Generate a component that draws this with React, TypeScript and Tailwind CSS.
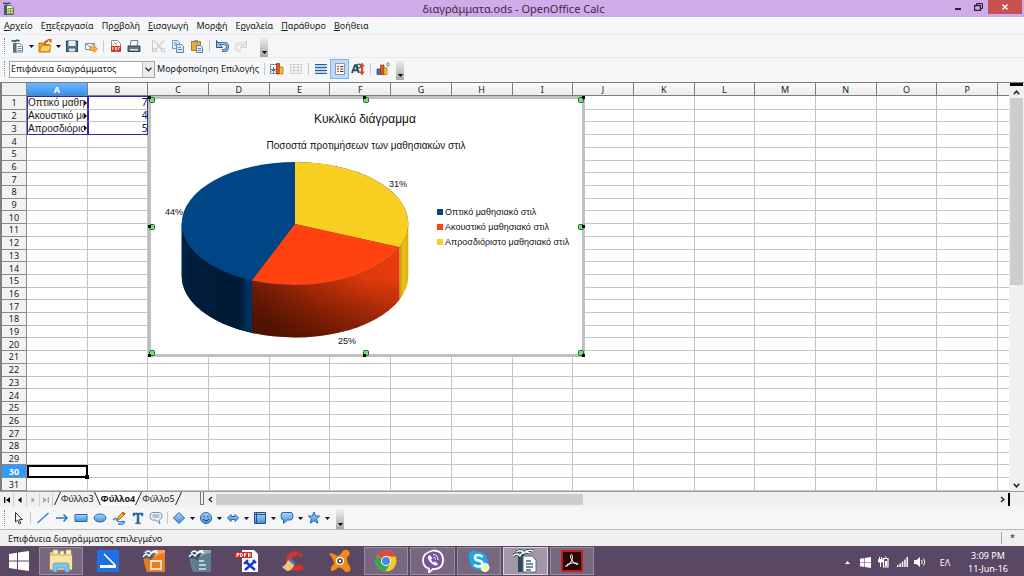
import React, { type ReactNode } from 'react';

type IconProps = { children: ReactNode; w?: number; h?: number };

function Icon({ children, w = 14, h = 14 }: IconProps) {
  return (
    <svg width={w} height={h} viewBox={`0 0 ${w} ${h}`} aria-hidden="true" className="shrink-0">
      {children}
    </svg>
  );
}

function Tool({ label, children, wide, active }: { label: string; children: ReactNode; wide?: boolean; active?: boolean }) {
  return (
    <button
      type="button"
      aria-label={label}
      title={label}
      className={`flex h-5 shrink-0 items-center justify-center ${wide ? 'w-[19px]' : 'w-[18px]'} ${
        active ? 'border border-[#7fb2e5] bg-[#b9dafa]' : ''
      }`}
    >
      {children}
    </button>
  );
}

function Caret({ label }: { label: string }) {
  return (
    <button type="button" aria-label={label} className="flex h-5 w-[9px] shrink-0 items-center justify-center">
      <Icon w={5} h={3}>
        <path d="M0 0h5L2.500 3z" fill="#111" />
      </Icon>
    </button>
  );
}

function Grip() {
  return <span className="ml-1 mr-1 h-4 w-px shrink-0 border-l border-dotted border-[#8c8c8c]" />;
}

function Sep() {
  return <span className="mx-[3px] h-3 w-px shrink-0 bg-[#c9c9c9]" />;
}

function BarEnd() {
  return (
    <button
      type="button"
      aria-label="Περισσότερα"
      className="flex h-5 w-2 shrink-0 items-end justify-center self-end bg-linear-to-b from-[#efefef] to-[#a8a8a8] pb-[3px]"
    >
      <Icon w={5} h={3}>
        <path d="M0 0h5L2.500 3z" fill="#000" />
      </Icon>
    </button>
  );
}

/* ---------- window frame ---------- */

function TitleBar() {
  return (
    <header className="flex h-[17px] shrink-0 items-center bg-[#cfabe8]">
      <span className="flex-1 pl-[3px]">
        <Icon w={12} h={14}>
          <path d="M1.500 3.500H8l2.500 2.500v6.500h-9z" fill="#eef5e4" stroke="#5c6b70" />
          <path d="M1 3h3v10H1z" fill="#465a63" />
          <path d="M0 1.500q2-1 3.500 .5q2-1.500 4-.5" stroke="#2c3b42" strokeWidth="1.200" fill="none" />
          <path d="M5 6.500h5v5H5z" fill="#e8f3b0" stroke="#7ba331" />
          <path d="M5 9h5M7.500 6.500v5" stroke="#7ba331" />
        </Icon>
      </span>
      <h1 className="text-[11px] leading-4 text-[#3a2b45]">διαγράμματα.ods - OpenOffice Calc</h1>
      <div className="flex h-full flex-1 items-start justify-end">
        <button type="button" aria-label="Ελαχιστοποίηση" className="flex h-[14px] w-5 items-center justify-center">
          <Icon w={6} h={6}>
            <path d="M0 4h6v2H0z" fill="#2d2038" />
          </Icon>
        </button>
        <button type="button" aria-label="Επαναφορά" className="flex h-[14px] w-5 items-center justify-center">
          <Icon w={9} h={8}>
            <path d="M2.500 2V.5h6v5H7" fill="none" stroke="#2d2038" />
            <path d="M.5 2.500h6v5h-6z" fill="none" stroke="#2d2038" strokeWidth="1.400" />
          </Icon>
        </button>
        <button type="button" aria-label="Κλείσιμο" className="mr-0.5 flex h-[14px] w-[34px] items-center justify-center bg-[#c75050]">
          <Icon w={6} h={6}>
            <path d="M.5 .5l5 5M5.500 .5l-5 5" stroke="#fff" strokeWidth="1.400" />
          </Icon>
        </button>
      </div>
    </header>
  );
}

const menus: [string, string, string][] = [
  ['', 'Α', 'ρχείο'],
  ['Ε', 'π', 'εξεργασία'],
  ['Πρ', 'ο', 'βολή'],
  ['', 'Ε', 'ισαγωγή'],
  ['Μορ', 'φ', 'ή'],
  ['Ε', 'ρ', 'γαλεία'],
  ['', 'Π', 'αράθυρο'],
  ['', 'Β', 'οήθεια'],
];

function MenuBar() {
  return (
    <nav className="flex h-[18px] shrink-0 items-center gap-2 border-b border-[#ebebeb] bg-[#f5f6f7] pl-1 text-[9px] leading-4">
      {menus.map(([a, u, b]) => (
        <button key={a + u + b} type="button" className="whitespace-nowrap">
          {a}
          <span className="underline">{u}</span>
          {b}
        </button>
      ))}
    </nav>
  );
}

/* ---------- toolbars ---------- */

function StandardBar() {
  return (
    <div role="toolbar" aria-label="Βασική" className="flex h-[22px] shrink-0 items-center bg-[#f4f6f8]">
      <Grip />
      <Tool label="Νέο">
        <Icon>
          <path d="M2.500 4.500h6l3 2.500v6h-9z" fill="#f4f9fc" stroke="#6a8596" />
          <path d="M2 4h3.500v9.500H2z" fill="#54707f" />
          <path d="M.5 2.500q2-1.500 3.500 0q2-2 4.500-.5" stroke="#38505e" strokeWidth="1.500" fill="none" />
          <path d="M6.500 7.500h4M6.500 9.500h4M6.500 11.500h4" stroke="#6f93a8" />
        </Icon>
      </Tool>
      <Caret label="Νέο, επιλογές" />
      <Tool label="Άνοιγμα">
        <Icon>
          <path d="M1 4h4l1 1.500h6V13H1z" fill="#f2a516" stroke="#c9750d" />
          <path d="M1.500 12.500l2.500-6h9l-2 6z" fill="#ffd45a" stroke="#d88a12" />
          <path d="M6 5.500q1-3.500 4-3.500" fill="none" stroke="#e2570f" strokeWidth="2" />
          <path d="M9 0h4.500v4.500z" fill="#e2570f" />
        </Icon>
      </Tool>
      <Caret label="Άνοιγμα, επιλογές" />
      <Tool label="Αποθήκευση">
        <Icon>
          <path d="M1.500 2h11v10.500h-11z" fill="#4f7291" stroke="#27425c" />
          <path d="M3.500 2h7v5h-7z" fill="#eaf2fa" />
          <path d="M4 9.500h6v3H4z" fill="#dde5ee" />
        </Icon>
      </Tool>
      <Tool label="Αποστολή" wide>
        <Icon>
          <path d="M1.500 4.500h9v6h-9z" fill="#f4f6f8" stroke="#7f8f9c" />
          <path d="M1.500 4.500l4.500 3.500l4.500-3.500" fill="none" stroke="#7f8f9c" />
          <path d="M6 8.500h4V6.500l3.500 3.500L10 13.500v-2H6z" fill="#f9b13a" stroke="#c97c12" strokeWidth=".7" />
        </Icon>
      </Tool>
      <Sep />
      <Tool label="Εξαγωγή ως PDF">
        <Icon>
          <path d="M2.500 1.500h6l3 3v8h-9z" fill="#fff" stroke="#8c8c8c" />
          <path d="M2 7h10v5.500H2z" fill="#dd2b20" />
          <path d="M3.500 11V8.500h1.200v1.200M6.500 8.500v2.500h1.300V8.500zM9.500 11V8.500H11" fill="none" stroke="#fff" strokeWidth=".7" />
          <path d="M5 3.500l3 2" stroke="#e05a50" />
        </Icon>
      </Tool>
      <Tool label="Εκτύπωση">
        <Icon>
          <path d="M4 1.500h7l-1 6H3z" fill="#f5f8fb" stroke="#71828f" />
          <path d="M1 7h12v5.500H1z" fill="#5d7384" stroke="#33485a" />
          <path d="M3 10h8v1.500H3z" fill="#d8e2ea" />
        </Icon>
      </Tool>
      <span className="ml-[9px] -mr-[3px] h-3 w-px shrink-0 bg-[#c9c9c9]" />
      <Tool label="Αποκοπή">
        <Icon>
          <path d="M2 1.500l8 9M12 1.500l-8 9" stroke="#cfd2d4" strokeWidth="1.500" />
          <circle cx="3" cy="11" r="1.800" fill="none" stroke="#c6c9cb" />
          <circle cx="11" cy="11" r="1.800" fill="none" stroke="#c6c9cb" />
        </Icon>
      </Tool>
      <Tool label="Αντιγραφή" wide>
        <Icon>
          <path d="M1.500 1.500h5l2 2v6h-7z" fill="#e3f0fb" stroke="#7997ad" />
          <path d="M5.500 5.500h5l2 2v6h-7z" fill="#d1e7f8" stroke="#65869f" />
          <path d="M3 4h3M3 6h2M7 8.500h3M7 10.500h4" stroke="#4c91c2" />
        </Icon>
      </Tool>
      <Tool label="Επικόλληση" wide>
        <Icon>
          <path d="M1.500 2.500h9v9h-9z" fill="#f0a733" stroke="#b97413" />
          <path d="M4 1h4v3H4z" fill="#8795a0" />
          <path d="M6.500 6.500h4l2 2v5h-6z" fill="#dcecf9" stroke="#5f7f99" />
          <path d="M8 9.500h3M8 11.500h3" stroke="#4c91c2" />
        </Icon>
      </Tool>
      <Sep />
      <Tool label="Αναίρεση">
        <Icon>
          <path d="M3 4.500h6q3.500 0 3.500 3.500T9 11.500H7" fill="none" stroke="#2b6194" strokeWidth="3" />
          <path d="M1.500 1.500v7h6z" fill="#8ec5ee" stroke="#24588a" />
          <path d="M4 4.500h5q3.500 0 3.500 3.500T9 11.500H7.500" fill="none" stroke="#8ec5ee" strokeWidth="1.300" />
        </Icon>
      </Tool>
      <Tool label="Επανάληψη" wide>
        <Icon>
          <path d="M11 4.500H5Q2 4.500 2 8t3 3.500h2" fill="none" stroke="#d3d6d9" strokeWidth="2.500" />
          <path d="M12.500 1.500v7h-6z" fill="#e6e9eb" stroke="#d0d3d6" />
          <path d="M10 4.500H5Q2 4.500 2 8t3 3.500h1.500" fill="none" stroke="#eef0f2" />
        </Icon>
      </Tool>
      <span className="w-2.5 shrink-0" />
      <BarEnd />
    </div>
  );
}

function FormatBar() {
  return (
    <div role="toolbar" aria-label="Μορφοποίηση" className="flex h-[25px] shrink-0 items-center border-t border-[#e9ebed] bg-[#f4f6f8] pb-0.5">
      <Grip />
      <div className="relative h-[17px] w-[146px] shrink-0">
        <select
          aria-label="Στοιχείο διαγράμματος"
          className="block h-full w-full appearance-none border border-[#a0a4a8] bg-white pl-px text-[9px] leading-[14px]"
          defaultValue="area"
        >
          <option value="area">Επιφάνεια διαγράμματος</option>
          <option value="title">Τίτλος</option>
        </select>
        <span className="pointer-events-none absolute inset-y-px right-px flex w-3 items-center justify-center border-l border-[#bcbcbc] bg-[#ececec]">
          <Icon w={7} h={5}>
            <path d="M.5 .8l3 3l3-3" fill="none" stroke="#333" strokeWidth="1.300" />
          </Icon>
        </span>
      </div>
      <button type="button" className="w-[109px] shrink-0 whitespace-nowrap pl-0.5 text-left text-[9px] leading-4">
        Μορφοποίηση Επιλογής
      </button>
      <span className="mr-[3px] h-3 w-px shrink-0 bg-[#c9c9c9]" />
      <Tool label="Τύπος διαγράμματος">
        <Icon>
          <path d="M.5 2.500h7v9h-7z" fill="#fff" stroke="#8b8b8b" />
          <path d="M1 7.500h5.500M3.500 5v6M1.500 9.500l2-2l2 2" stroke="#566a9e" fill="none" />
          <path d="M6.500 1.500h3V12h-3z" fill="#e9531d" stroke="#8c2c0b" strokeWidth=".7" />
          <path d="M9.500 5h3.500v7H9.500z" fill="#fbc02d" stroke="#a56f07" strokeWidth=".7" />
        </Icon>
      </Tool>
      <Tool label="Πίνακας δεδομένων" wide>
        <Icon>
          <path d="M1.500 2.500h11v9h-11zM1.500 5.500h11M1.500 8.500h11M5 2.500v9M9 2.500v9" fill="#f8f8f8" stroke="#d2d2d2" />
        </Icon>
      </Tool>
      <Sep />
      <Tool label="Οριζόντια πλέγματα">
        <Icon>
          <path d="M1 2h11v10H1z" fill="#b5d6f5" />
          <path d="M1 2.500h12M1 5.500h12M1 8.500h12M1 11.500h12" stroke="#2d5f92" />
        </Icon>
      </Tool>
      <Tool label="Υπόμνημα" active wide>
        <Icon>
          <path d="M2.500 1.500h9v11h-9z" fill="#fff" stroke="#8d99a5" />
          <path d="M4 4.500h2M4 7h2M4 9.500h2" stroke="#d9602a" strokeWidth="1.400" />
          <path d="M7 4.500h3.500M7 7h3.500M7 9.500h3.500" stroke="#2f3c48" />
        </Icon>
      </Tool>
      <Tool label="Κλίμακα κειμένου">
        <Icon>
          <path d="M1 11L4 3.200h1L8 11M2.200 8.300h4.500" fill="none" stroke="#2e4c68" strokeWidth="2" />
          <circle cx="8" cy="4" r="1.800" fill="none" stroke="#2e4c68" strokeWidth="1.200" />
          <path d="M11 .5l2.800 4H8.200zM11 13.500l2.800-4H8.200z" fill="#e04a1f" />
          <path d="M11 3v8" stroke="#e04a1f" strokeWidth="2.200" />
        </Icon>
      </Tool>
      <Sep />
      <Tool label="Αυτόματη διάταξη">
        <Icon>
          <path d="M1 7h3.500v5.500H1z" fill="#3f76ad" stroke="#1d436d" strokeWidth=".7" />
          <path d="M4.500 3h3.500v9.500H4.500z" fill="#e9531d" stroke="#8c2c0b" strokeWidth=".7" />
          <path d="M8 6h3v6.500H8z" fill="#fbc02d" stroke="#a56f07" strokeWidth=".7" />
          <path d="M11 1h2v3h-2z" fill="none" stroke="#777" strokeWidth=".8" />
        </Icon>
      </Tool>
      <span className="w-1 shrink-0" />
      <BarEnd />
    </div>
  );
}

/* ---------- spreadsheet ---------- */

const columns = 'ABCDEFGHIJKLMNOP'.split('');
const rows = Array.from({ length: 31 }, (_, i) => i + 1);
const data: Record<number, [string, number]> = {
  1: ['Οπτικό μαθη', 7],
  2: ['Ακουστικό μα', 4],
  3: ['Απροσδιόρισ', 5],
};

function cellEdges(row: number, col: string) {
  if (row <= 3 && (col === 'A' || col === 'B')) {
    const top = row === 1 ? 'border-t border-t-[#2a2ab0]' : '';
    const bottom = row === 3 ? 'border-b-[#2a2ab0]' : 'border-b-[#c4c4c4]';
    return `border-r border-b border-l border-x-[#2a2ab0] ${top} ${bottom}`;
  }
  if (row === 30 && col === 'A') return 'border-2 border-black';
  return 'border-r border-b border-[#c4c4c4]';
}

function Sheet() {
  return (
    <table className="h-full w-full table-fixed border-separate border-spacing-0 bg-white text-[9px] leading-[11px]">
      <colgroup>
        <col className="w-[25px]" />
        {columns.map((c) => (
          <col key={c} />
        ))}
        <col className="w-[11px]" />
      </colgroup>
      <thead>
        <tr className="h-[13px]">
          <th aria-label="Επιλογή όλων" className="border-r border-b border-[#8a8a8a] bg-[#f0f0f0] p-0" />
          {columns.map((c) => (
            <th
              key={c}
              scope="col"
              className={`border-r border-b border-[#7d7d7d] p-0 ${
                c === 'A' ? 'bg-linear-to-b from-[#6db5ff] to-[#2f93f5] font-bold text-white' : 'bg-linear-to-b from-[#fafafa] to-[#ececec] font-normal'
              }`}
            >
              {c}
            </th>
          ))}
          <th aria-label="Q" className="border-b border-[#7d7d7d] bg-[#f3f3f3] p-0" />
        </tr>
      </thead>
      <tbody>
        {rows.map((r) => (
          <tr key={r}>
            <th
              scope="row"
              className={`border-r border-b border-[#8a8a8a] p-0 ${
                r === 30 ? 'bg-[#3399ff] font-bold text-white' : 'bg-[#f2f2f2] font-normal'
              }`}
            >
              {r}
            </th>
            {columns.map((c) => (
              <td key={c} className={`p-0 ${cellEdges(r, c)}`}>
                {c === 'A' && data[r] && (
                  <div className="flex items-center font-['Liberation_Sans',Arial,sans-serif] text-[10px]">
                    <span className="min-w-0 flex-1 overflow-hidden whitespace-nowrap">{data[r][0]}</span>
                    <Icon w={3} h={6}>
                      <path d="M0 0l3 3l-3 3z" fill="#200030" />
                    </Icon>
                  </div>
                )}
                {c === 'B' && data[r] && <div className="text-right text-[10px]">{data[r][1]}</div>}
                {c === 'A' && r === 30 && (
                  <div className="relative">
                    <span className="absolute -right-[3px] top-[3px] size-1 bg-black" />
                  </div>
                )}
              </td>
            ))}
            <td className="border-b border-[#c4c4c4] p-0" />
          </tr>
        ))}
      </tbody>
    </table>
  );
}

const legend = [
  { label: 'Οπτικό μαθησιακό στιλ', fill: '#004586' },
  { label: 'Ακουστικό μαθησιακό στιλ', fill: '#ff420e' },
  { label: 'Απροσδιόριστο μαθησιακό στιλ', fill: '#f9d022' },
];

const handles: [number, number][] = [
  [4, 4], [218, 4], [433, 4],
  [4, 131], [433, 131],
  [4, 257], [218, 257], [433, 257],
];

function PieChart() {
  return (
    <svg width="437" height="261" viewBox="0 0 437 261" role="img" aria-label="Κυκλικό διάγραμμα" fontFamily="'Liberation Sans', Arial, sans-serif" fill="#111">
      <defs>
        <linearGradient id="blueSide" x1="0" x2="1">
          <stop offset="0" stopColor="#00244a" />
          <stop offset=".12" stopColor="#001c38" />
          <stop offset=".82" stopColor="#001b36" />
          <stop offset=".9" stopColor="#002a52" />
          <stop offset="1" stopColor="#003668" />
        </linearGradient>
        <linearGradient id="redSide" x1="0" y1=".7" x2="1" y2=".2">
          <stop offset="0" stopColor="#5f1603" />
          <stop offset=".4" stopColor="#a82a07" />
          <stop offset=".75" stopColor="#dd390c" />
          <stop offset="1" stopColor="#e83c0d" />
        </linearGradient>
        <linearGradient id="redShade" x1="0" x2="0" y1="0" y2="1">
          <stop offset=".35" stopColor="#3a0c00" stopOpacity="0" />
          <stop offset="1" stopColor="#3a0c00" stopOpacity=".5" />
        </linearGradient>
        <linearGradient id="yellowSide" x1="0" x2="1">
          <stop offset="0" stopColor="#c09c0c" />
          <stop offset=".45" stopColor="#ecc41b" />
          <stop offset="1" stopColor="#d5af12" />
        </linearGradient>
      </defs>
      <rect x="1.500" y="1.500" width="434" height="258" fill="#fff" stroke="#c0c0c0" strokeWidth="3" />
      <text x="217" y="27" fontSize="12" textAnchor="middle">Κυκλικό διάγραμμα</text>
      <text x="218" y="53" fontSize="10" textAnchor="middle">Ποσοστά προτιμήσεων των μαθησιακών στιλ</text>

      <path d="M33.700 127.500V180A113.300 61.500 0 0 0 104 236.900V184H147V127.500Z" fill="url(#blueSide)" />
      <path d="M33.700 127.500V180A113.300 61.500 0 0 0 104 236.900V184Z" fill="url(#blueSide)" />
      <path d="M251.500 151V203.800A113.300 61.500 0 0 0 260.300 180V127.500Z" fill="url(#yellowSide)" />
      <path d="M104 184V236.900A113.300 61.500 0 0 0 251.500 203.800V150Z" fill="url(#redSide)" />
      <path d="M104 184V236.900A113.300 61.500 0 0 0 251.500 203.800V150Z" fill="url(#redShade)" />
      <ellipse cx="147" cy="127.500" rx="113.300" ry="61.500" fill="#004586" />
      <path d="M147 128V66A113.300 61.500 0 0 1 251.500 151.200Z" fill="#f9d022" />
      <path d="M147 128L251.500 151.200A113.300 61.500 0 0 1 104 184.400Z" fill="#ff420e" />

      <g fontSize="9">
        <text x="17" y="119">44%</text>
        <text x="241" y="91">31%</text>
        <text x="190" y="248">25%</text>
        {legend.map((item, i) => (
          <g key={item.label}>
            <rect x="289" y={113 + i * 15} width="6" height="6" fill={item.fill} />
            <text x="297" y={119 + i * 15}>{item.label}</text>
          </g>
        ))}
      </g>

      {handles.map(([x, y]) => (
        <g key={`${x}-${y}`}>
          <rect x={x - 2.500} y={y - 2.500} width="5" height="5" rx="1" fill="#6fe07a" stroke="#1c6b26" />
          <rect x={x < 10 ? 0 : x > 400 ? 434 : x - 3} y={y < 10 ? 0 : y > 200 ? 258 : y - 2} width="3" height="3" fill="#000" />
        </g>
      ))}
    </svg>
  );
}

function VerticalScroll() {
  return (
    <div className="flex w-[15px] shrink-0 flex-col items-center bg-[#f0f0f0]">
      <span className="h-[3px] w-[13px] bg-black" />
      <button type="button" aria-label="Πάνω" className="flex h-3 w-full items-center justify-center">
        <Icon w={7} h={5}><path d="M.8 4.200l2.700-3l2.700 3" fill="none" stroke="#222" strokeWidth="1.500" /></Icon>
      </button>
      <div className="w-full flex-1 px-px">
        <div className="h-[49%] bg-[#cdcdcd]" />
      </div>
      <button type="button" aria-label="Κάτω" className="flex h-3 w-full items-center justify-center">
        <Icon w={7} h={5}><path d="M.8 .8l2.700 3l2.700-3" fill="none" stroke="#222" strokeWidth="1.500" /></Icon>
      </button>
    </div>
  );
}

/* ---------- sheet tabs ---------- */

function Slash({ back, left, right }: { back?: boolean; left?: string; right?: string }) {
  return (
    <svg width="7" height="13" viewBox="0 0 7 13" aria-hidden="true" className="shrink-0">
      {left && <path d={back ? 'M0 0L7 13H0z' : 'M0 0H7L0 13z'} fill={left} />}
      {right && <path d={back ? 'M0 0H7V13z' : 'M7 0V13H0z'} fill={right} />}
      <path d={back ? 'M.5 0L6.500 13' : 'M6.500 0L.5 13'} stroke="#222" />
    </svg>
  );
}

function NavButton({ label, d, off }: { label: string; d: string; off?: boolean }) {
  return (
    <button type="button" aria-label={label} className={`flex h-[14px] w-[13px] items-center justify-center border-r border-[#cfcfcf] ${off ? 'text-[#aaa]' : 'text-black'}`}>
      <Icon w={6} h={6}><path d={d} fill="currentColor" /></Icon>
    </button>
  );
}

function TabRow() {
  return (
    <div className="flex h-4 shrink-0 items-stretch border-t border-[#9b9b9b] bg-[#f0f0f0] text-[9px] leading-[14px]">
      <div className="flex w-[54px] shrink-0 items-center pl-px">
        <NavButton label="Πρώτο φύλλο" d="M0 0h1.300v6H0zM6 0v6L2 3z" />
        <NavButton label="Προηγούμενο φύλλο" d="M4.500 0v6L1 3z" />
        <NavButton label="Επόμενο φύλλο" d="M1.500 0v6L5 3z" off />
        <NavButton label="Τελευταίο φύλλο" d="M4.700 0H6v6H4.700zM0 0v6L4 3z" off />
      </div>
      <div className="flex w-[146px] shrink-0 items-start">
        <Slash />
        <button type="button">Φύλλο3</button>
        <Slash back right="#fff" />
        <button type="button" className="bg-white font-bold">Φύλλο4</button>
        <Slash left="#fff" />
        <button type="button">Φύλλο5</button>
        <Slash />
      </div>
      <span className="h-[13px] w-1 shrink-0 border-x border-b border-[#777]" />
      <button type="button" aria-label="Αριστερά" className="flex w-3 shrink-0 items-center justify-center">
        <Icon w={5} h={7}><path d="M4 1L1.200 3.500L4 6" fill="none" stroke="#222" strokeWidth="1.300" /></Icon>
      </button>
      <div className="min-w-0 flex-1 py-0.5">
        <div className="h-full w-[47%] bg-[#cdcdcd]" />
      </div>
      <button type="button" aria-label="Δεξιά" className="flex w-3 shrink-0 items-center justify-center">
        <Icon w={5} h={7}><path d="M1 1l2.800 2.500L1 6" fill="none" stroke="#222" strokeWidth="1.500" /></Icon>
      </button>
      <span className="my-px mr-[14px] w-0.5 shrink-0 bg-black" />
    </div>
  );
}

/* ---------- drawing bar ---------- */

const shapes: { label: string; glyph: ReactNode }[] = [
  { label: 'Βασικά σχήματα', glyph: <path d="M7 1.500L12.500 7L7 12.500L1.500 7z" fill="url(#sky)" stroke="#2a67a8" /> },
  {
    label: 'Σχήματα συμβόλων',
    glyph: (
      <>
        <circle cx="7" cy="7" r="5.500" fill="url(#sky)" stroke="#2a67a8" />
        <path d="M4 8q3 3.500 6 0M5 4.500v1.500M9 4.500v1.500" fill="none" stroke="#17406e" />
      </>
    ),
  },
  { label: 'Βέλη', glyph: <path d="M1.500 7L5 3.500v2h4v-2L12.500 7L9 10.500v-2H5v2z" fill="url(#sky)" stroke="#2a67a8" /> },
  {
    label: 'Διάγραμμα ροής',
    glyph: (
      <>
        <path d="M1.500 1.500h11v11h-11z" fill="url(#sky)" stroke="#1f4f86" />
        <path d="M3.500 2v10M2 3.500h10" stroke="#1f4f86" />
      </>
    ),
  },
  { label: 'Επεξηγήσεις', glyph: <path d="M3 1.500h8q2 0 2 3.500t-2 4H7.500L3.500 12.500V9Q1 9 1 5t2-3.500z" fill="url(#sky)" stroke="#2a67a8" /> },
  { label: 'Αστέρια', glyph: <path d="M7 1l1.700 4h4L9.600 7.800l1.200 4.400L7 9.700l-3.800 2.500l1.200-4.400L1.300 5h4z" fill="url(#sky)" stroke="#2a67a8" /> },
];

function DrawingBar() {
  return (
    <div role="toolbar" aria-label="Σχεδίαση" className="flex h-[23px] shrink-0 items-center border-b border-[#b9b9b9] bg-[#f4f6f8]">
      <svg width="0" height="0" aria-hidden="true">
        <defs>
          <linearGradient id="sky" x1="0" y1="0" x2="0" y2="1">
            <stop offset="0" stopColor="#a9d4fb" />
            <stop offset="1" stopColor="#4390dc" />
          </linearGradient>
        </defs>
      </svg>
      <Grip />
      <Tool label="Επιλογή">
        <Icon><path d="M4.500 1.500v9.500l2.200-2l1.600 4l1.600-.8L8.300 8.500h3z" fill="#fff" stroke="#333" /></Icon>
      </Tool>
      <Sep />
      <Tool label="Γραμμή"><Icon><path d="M1.500 12L12.500 2" stroke="#3a83cb" strokeWidth="1.400" /></Icon></Tool>
      <Tool label="Βέλος" wide>
        <Icon><path d="M1 7h11M8.500 3.500L12 7L8.500 10.500" fill="none" stroke="#2f75bd" strokeWidth="1.500" /></Icon>
      </Tool>
      <Tool label="Ορθογώνιο" wide><Icon><path d="M1 3.500h12v7H1z" fill="url(#sky)" stroke="#2a67a8" /></Icon></Tool>
      <Tool label="Έλλειψη" wide><Icon><ellipse cx="7" cy="7" rx="6" ry="4" fill="url(#sky)" stroke="#2a67a8" /></Icon></Tool>
      <Tool label="Ελεύθερη γραμμή" wide>
        <Icon>
          <path d="M1 9q3-3 4 0t6 1.500q2-.5 1 1.500t-6 1" fill="none" stroke="#3a83cb" strokeWidth="1.400" />
          <path d="M4.500 9.500L6 6l5-5l2 2l-5 5z" fill="#f7a92c" stroke="#a8600d" strokeWidth=".8" />
          <path d="M10 2l1.200-1.200l2 2L12 4z" fill="#d43b25" />
        </Icon>
      </Tool>
      <Tool label="Κείμενο" wide>
        <Icon><path d="M2 2h10v3h-1.200L10 3.500H8v7.700l1.500.8v.8h-5V12l1.500-.8V3.500H4L3.200 5H2z" fill="#2e6da6" stroke="#1e5286" strokeWidth=".4" /></Icon>
      </Tool>
      <Tool label="Επεξήγηση">
        <Icon>
          <path d="M3.500 1.500h7q2.500 .5 2.500 3.500t-2.500 4H10l1 4L7 9H3.500Q1 8.500 1 5.200t2.500-3.700z" fill="#f0f5fa" stroke="#7590a8" />
          <path d="M3.500 4h7M3.500 6h7" stroke="#7590a8" />
        </Icon>
      </Tool>
      <span className="mx-0.5 h-3 w-px shrink-0 bg-[#c9c9c9]" />
      {shapes.map((s) => (
        <React.Fragment key={s.label}>
          <Tool label={s.label}><Icon>{s.glyph}</Icon></Tool>
          <Caret label={`${s.label}, επιλογές`} />
        </React.Fragment>
      ))}
      <span className="w-1 shrink-0" />
      <BarEnd />
    </div>
  );
}

function StatusBar() {
  return (
    <footer className="flex h-4 shrink-0 items-end justify-between bg-[#f0f0f0] pl-2 text-[9px] leading-[14px]">
      <span>Επιφάνεια διαγράμματος επιλεγμένο</span>
      <span className="mr-[9px] mb-0.5 flex h-3 items-center border-l border-[#a8a8a8] pl-2">*</span>
    </footer>
  );
}

/* ---------- taskbar ---------- */

const apps: { label: string; state?: 'open' | 'active'; glyph: ReactNode }[] = [
  {
    label: 'Εξερεύνηση αρχείων',
    state: 'open',
    glyph: (
      <>
        <path d="M1 3h8l1 2h13v16H1z" fill="#e8cf76" stroke="#b99b42" strokeWidth=".6" />
        <path d="M4 1h5v4H4zM11 2h4v4h-4zM17 1h5v5h-5z" fill="#f4efcf" stroke="#c4b171" strokeWidth=".6" />
        <path d="M1 7h22v13H1z" fill="#f6e7a0" />
        <path d="M4 23v-7q0-2 2-2h12q2 0 2 2v7h-4v-4H8v4z" fill="#7cc4ea" stroke="#4e9cc8" strokeWidth=".7" />
      </>
    ),
  },
  {
    label: 'Σάρωση',
    glyph: (
      <>
        <path d="M1 1h22v22H1z" fill="#1f6fe5" />
        <path d="M4 16h16v3H4z" fill="#fff" />
        <path d="M8 5l11 11" stroke="#fff" strokeWidth="1.600" />
      </>
    ),
  },
  {
    label: 'OpenOffice Impress',
    glyph: (
      <>
        <path d="M1 2h20q2 0 2 2v19H5Q1 14 1 2z" fill="#ee7a1c" />
        <path d="M1 1h13Q13 8 9 11Q5 8 1 10z" fill="#53646e" />
        <path d="M14 1h9v3Q17 4 11 9Q14 5 14 1z" fill="#f6a65c" />
        <path d="M1 8q3-5 6-1q4-6 9-3M3 4q4-4 6 0q3-3 6-2" fill="none" stroke="#fff" strokeWidth="1.400" />
        <path d="M9 12h10v8H9z" fill="none" stroke="#ffe5cb" strokeWidth="1.800" />
      </>
    ),
  },
  {
    label: 'OpenOffice',
    glyph: (
      <>
        <path d="M1 2h20q2 0 2 2v19H5Q1 14 1 2z" fill="#5f7d8d" />
        <path d="M1 1h13Q13 8 9 11Q5 8 1 10z" fill="#3f525d" />
        <path d="M14 1h9v3Q17 4 11 9Q14 5 14 1z" fill="#93a9b4" />
        <path d="M1 8q3-5 6-1q4-6 9-3M3 4q4-4 6 0q3-3 6-2" fill="none" stroke="#fff" strokeWidth="1.400" />
        <path d="M11 12h5M11 16h7M11 20h7" stroke="#dbe7ee" strokeWidth="1.600" />
      </>
    ),
  },
  {
    label: 'PDF εργαλεία',
    glyph: (
      <>
        <path d="M7 1h12l4 4v18H7z" fill="#fff" />
        <path d="M0 3h17v6H0z" fill="#d9221c" />
        <path d="M2 8V4.500h2V6H2M5.500 4.500v3h1.500l.8-1.500l-.8-1.500zM9.500 8V4.500h2M9.500 6h1.500M13.500 4v4M15 4v4" fill="none" stroke="#fff" />
        <path d="M11 13l9 8M19 13l-9 8" stroke="#1436d6" strokeWidth="2.400" />
        <path d="M9 15l4-4M18 11l3 3" stroke="#1436d6" strokeWidth="2.400" />
      </>
    ),
  },
  {
    label: 'CCleaner',
    glyph: (
      <>
        <path d="M22 6Q18 1 12 2.500Q4 5 5 13q2 9 11 9q4 0 7-3l-3-4q-4 3-8 0q-3-4 0-7q4-3 7 0z" fill="#d8322a" />
        <path d="M20 2l-8 9" stroke="#714a2b" strokeWidth="1.800" />
        <path d="M9 9l6 5l-2 2l-6-5z" fill="#3a78c2" />
        <path d="M7 11l6 5q-2 6-7 6l-5-4q4-2 6-7z" fill="#f0c37f" />
      </>
    ),
  },
  {
    label: 'Avast',
    glyph: (
      <>
        <path d="M1 5Q4 3 9 7q4-1 5-4q3-4 7-1q2 4-2 6q0 3 1 7q4 3 2 7q-5 3-7-2q-3-2-5-1.500q-3 3.500-7 3.500q-1-4 3-7Q6 10 1 5z" fill="#f58a14" />
        <circle cx="12" cy="12" r="4" fill="#fff" />
        <circle cx="12" cy="12" r="2" fill="none" stroke="#444" strokeWidth="1.600" />
      </>
    ),
  },
  {
    label: 'Chrome',
    state: 'open',
    glyph: (
      <>
        <circle cx="12" cy="12" r="10.500" fill="#f6c927" />
        <path d="M12 12L3 6.500A10.500 10.500 0 0 1 21.500 7.500H12z" fill="#dd4b3e" />
        <path d="M12 12L2.900 6.700A10.500 10.500 0 0 0 11.500 22.500L16 14.500z" fill="#3ba457" />
        <circle cx="12" cy="12" r="5" fill="#fff" />
        <circle cx="12" cy="12" r="4" fill="#4a86e8" />
      </>
    ),
  },
  {
    label: 'Viber',
    state: 'open',
    glyph: (
      <>
        <path d="M12 1.500q10 0 10 9.500t-10 9l-4 3.500V19.500Q2 18 2 11t10-9.500z" fill="#7a519f" stroke="#fff" strokeWidth="1.800" />
        <path d="M8 6.500q-2 1-1 3q2 5 7 7q2 .5 3-1.500l-3-2.500l-1.500 1q-2-1-2.500-3L11.500 9.500L9.500 6.500z" fill="#fff" />
        <path d="M12 5.500q5 0 5 5.500M12.500 8q2 .5 2 2.500" fill="none" stroke="#fff" />
      </>
    ),
  },
  {
    label: 'Skype',
    state: 'open',
    glyph: (
      <>
        <circle cx="11.500" cy="11.500" r="9" fill="#1ba9e8" />
        <circle cx="7" cy="7" r="5.500" fill="#1ba9e8" />
        <circle cx="16" cy="16" r="5.500" fill="#1ba9e8" />
        <path d="M15.500 8Q14 6 11.500 6Q8 6 8 8.500T11.500 11.500t4 3T11.500 17.500Q8.500 17.500 7.500 15.500" fill="none" stroke="#fff" strokeWidth="2.600" />
        <circle cx="18" cy="18.500" r="4" fill="#eaf7b5" stroke="#fff" />
      </>
    ),
  },
  {
    label: 'OpenOffice Calc',
    state: 'active',
    glyph: (
      <>
        <path d="M5 5h6v18H5z" fill="#2d4a5c" />
        <path d="M10 7h9l4 4v12H10z" fill="#fff" stroke="#4e6b7c" />
        <path d="M13 12h5M13 15h7M13 18h7M13 21h5" stroke="#46687c" strokeWidth="1.300" />
        <path d="M0 7q4-4 7 0q3-6 10-3M4 3q4-3 7 1q4-4 9-2" fill="none" stroke="#1f3644" strokeWidth="3" />
        <path d="M0 7q4-4 7 0q3-6 10-3M4 3q4-3 7 1q4-4 9-2" fill="none" stroke="#fff" strokeWidth="1.500" />
      </>
    ),
  },
  {
    label: 'Adobe Reader',
    state: 'open',
    glyph: (
      <>
        <path d="M2 2h20v20H2z" fill="#2a0604" stroke="#c3201a" strokeWidth="1.800" />
        <path d="M6 17.500q5-2 6.500-9q0-3-1.200-3t-.5 3.500q2 5 6 6.500q1.500 0 .8-1.200q-5-1.500-10.600 1.200q-2 1.500-1 2z" fill="none" stroke="#fff" />
      </>
    ),
  },
];

const windowsLogo = 'M0 3L8 1.800V9.500H0zM9 1.600L20 0V9.500H9zM0 10.500H8V18.200L0 17zM9 10.500H20V20L9 18.400z';

function Taskbar() {
  return (
    <div className="flex h-[30px] shrink-0 items-stretch justify-between bg-[#5a4763] text-white">
      <div className="flex">
        <button type="button" aria-label="Έναρξη" className="flex w-[38px] items-center justify-center">
          <Icon w={20} h={20}><path d={windowsLogo} fill="#fff" /></Icon>
        </button>
        <div className="grid w-[557px] grid-cols-12">
          {apps.map((a) => (
            <button
              key={a.label}
              type="button"
              aria-label={a.label}
              className={`mx-px my-px flex items-center justify-center ${
                a.state === 'active'
                  ? 'border border-[#d9d2dc] bg-[#a297a8]'
                  : a.state === 'open'
                    ? 'border border-[#9a8da0] bg-[#78687f]'
                    : ''
              }`}
            >
              <Icon w={24} h={24}>{a.glyph}</Icon>
            </button>
          ))}
        </div>
      </div>
      <div className="flex items-center pt-0.5 text-[9px] leading-[13px]">
        <button type="button" aria-label="Κρυφά εικονίδια" className="flex w-[18px] justify-center">
          <Icon w={5} h={3}><path d="M2.500 0L5 3H0z" fill="#fff" /></Icon>
        </button>
        <span className="flex w-[18px] justify-center">
          <svg width="11" height="11" viewBox="0 0 20 20" aria-hidden="true"><path d={windowsLogo} fill="#fff" /></svg>
        </span>
        <span className="flex w-[19px] justify-center">
          <Icon w={11} h={12}>
            <path d="M5.500 2.500h4.500v8.500H5.500zM7 1h1.500" fill="none" stroke="#fff" strokeWidth="1.200" />
            <path d="M7 5h2v5H7z" fill="#fff" />
            <path d="M.5 3.500h4V6h-4zM1.500 1v3M3.500 1v3M2.500 6v5" fill="#fff" stroke="#fff" />
          </Icon>
        </span>
        <span className="flex w-[18px] justify-center">
          <Icon w={11} h={10}>
            <path d="M0 8h1.500v2H0zM2.400 6.500h1.500V10H2.400zM4.800 4.500h1.500V10H4.800zM7.200 2.500h1.500V10H7.200zM9.500 0H11v10H9.500z" fill="#fff" />
          </Icon>
        </span>
        <span className="flex w-[18px] justify-center">
          <Icon w={12} h={10}>
            <path d="M0 3h2.500L6 0v10L2.500 7H0z" fill="#fff" />
            <path d="M7.500 3q1.500 2 0 4M9.500 1.500q2.500 3.500 0 7" fill="none" stroke="#fff" />
          </Icon>
        </span>
        <span className="w-8 text-center">ΕΛ</span>
        <time dateTime="2016-06-11T15:09" className="w-[54px] text-center">
          <span className="block">3:09 PM</span>
          <span className="block">11-Jun-16</span>
        </time>
        <span className="w-[9px]" />
      </div>
    </div>
  );
}

export default function App() {
  return (
    <div className="flex h-screen w-full flex-col overflow-hidden bg-[#f4f6f8] font-['Noto_Sans','Open_Sans',sans-serif] text-[#1a1a1a]">
      <TitleBar />
      <MenuBar />
      <StandardBar />
      <FormatBar />
      <main className="flex min-h-0 flex-1 border-t border-l-2 border-[#7d7d7d]">
        <div className="relative min-w-0 flex-1">
          <Sheet />
          <div className="absolute left-[146px] top-[13px]">
            <PieChart />
          </div>
        </div>
        <VerticalScroll />
      </main>
      <TabRow />
      <DrawingBar />
      <StatusBar />
      <Taskbar />
    </div>
  );
}
